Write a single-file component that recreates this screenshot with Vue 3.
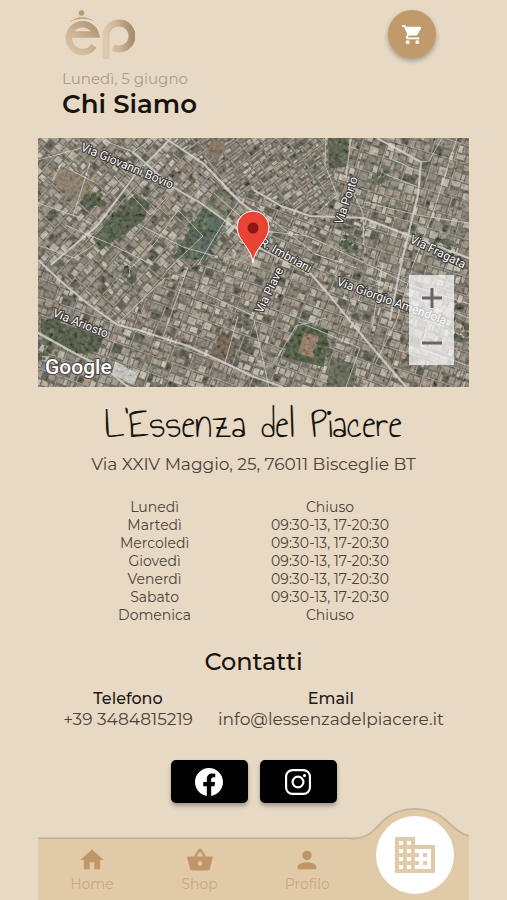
<template>
  <div class="app">
    <header class="header">
      <div class="heading">
        <svg class="logo" viewBox="0 0 72 51" role="img" aria-label="L'Essenza del Piacere">
          <defs>
            <linearGradient id="logo-e" x1="0" y1="1" x2="1" y2="0">
              <stop offset="0" stop-color="#dcc6a8" />
              <stop offset="0.5" stop-color="#c9b090" />
              <stop offset="1" stop-color="#ae9474" />
            </linearGradient>
            <linearGradient id="logo-p" x1="0" y1="0.6" x2="1" y2="0.4">
              <stop offset="0" stop-color="#dfc9ac" />
              <stop offset="0.5" stop-color="#ccb495" />
              <stop offset="1" stop-color="#a88f70" />
            </linearGradient>
          </defs>
          <path d="M7 25.500H33A13.800 13.800 0 1 0 31 37" fill="none" stroke="url(#logo-e)" stroke-width="6.500" />
          <path d="M43 50V26A13 13 0 1 1 50 38.500" fill="none" stroke="url(#logo-p)" stroke-width="7" />
          <path d="M6 13Q18 4 31 12Q18 7 6 13Z" fill="#bb9e78" />
          <circle cx="18.500" cy="4" r="2.800" fill="#b99c75" />
        </svg>
        <p class="date">Lunedì, 5 giugno</p>
        <h1 class="title">Chi Siamo</h1>
      </div>
      <button class="cart" type="button" aria-label="Carrello">
        <svg viewBox="0 0 24 24">
          <path d="M7 18c-1.100 0-2 .9-2 2s.9 2 2 2 2-.9 2-2-.9-2-2-2zM1 2v2h2l3.600 7.600-1.400 2.400C4.500 15.400 5.500 17 7 17h12v-2H7.400c-.1 0-.2-.1-.2-.2L8.100 13h7.500c.7 0 1.400-.4 1.700-1L21 5.500C21.300 4.800 20.900 4 20 4H5.200l-.9-2H1zm16 16c-1.100 0-2 .9-2 2s.9 2 2 2 2-.9 2-2-.9-2-2-2z" />
        </svg>
      </button>
    </header>

    <main>
      <section class="map" aria-label="Mappa">
        <svg class="map-view" viewBox="0 0 431 249" preserveAspectRatio="xMidYMid slice">
          <defs>
            <filter id="grain" x="0" y="0" width="100%" height="100%">
              <feTurbulence type="fractalNoise" baseFrequency="0.25" numOctaves="3" seed="7" />
              <feColorMatrix values="1.500 0 0 0 -0.300  1.500 0 0 0 -0.320  1.500 0 0 0 -0.360  0 0 0 0 1" />
            </filter>
            <clipPath v-for="d in districts" :id="d.id" :key="d.id">
              <path :d="d.outline" />
            </clipPath>
          </defs>
          <rect width="431" height="249" fill="#5d594f" />
          <g v-for="d in districts" :key="d.id" :clip-path="`url(#${d.id})`">
            <g :transform="`translate(${d.x} ${d.y}) rotate(${d.angle})`">
              <rect
                v-for="(b, i) in d.buildings"
                :key="i"
                :x="b.x"
                :y="b.y"
                :width="b.w"
                :height="b.h"
                :fill="b.fill"
              />
              <path class="lane" :d="d.lanes" />
            </g>
          </g>
          <path v-for="area in areas" :key="area.d" :d="area.d" :fill="area.fill" />
          <circle v-for="(t, i) in trees" :key="i" :cx="t.x" :cy="t.y" :r="t.r" :fill="t.fill" />
          <rect width="431" height="249" filter="url(#grain)" opacity="0.25" />
          <path class="street minor" :d="minorStreets" />
          <path class="street major" :d="majorStreets" />
          <text
            v-for="s in streetNames"
            :key="s.name"
            class="street-name"
            :transform="`translate(${s.x} ${s.y}) rotate(${s.angle})`"
          >{{ s.name }}</text>
          <text class="google" x="7" y="236">Google</text>
          <path d="M215 125C214 110 199 103 199 89A16 16 0 0 1 231 89C231 103 216 110 215 125Z" fill="#ea4335" stroke="#fff" stroke-width="1" />
          <circle cx="215" cy="90" r="5.500" fill="#8c1713" />
        </svg>
        <div class="zoom">
          <button type="button" aria-label="Ingrandisci">
            <svg viewBox="0 0 20 20"><path d="M8.500 0h3v8.500H20v3h-8.500V20h-3v-8.500H0v-3h8.500z" /></svg>
          </button>
          <button type="button" aria-label="Riduci">
            <svg viewBox="0 0 20 20"><path d="M0 8.500h20v3H0z" /></svg>
          </button>
        </div>
      </section>

      <section class="shop">
        <h2 class="shop-name">L'Essenza del Piacere</h2>
        <p class="address">Via XXIV Maggio, 25, 76011 Bisceglie BT</p>
        <table class="hours">
          <tbody>
            <tr v-for="row in hours" :key="row.day">
              <th scope="row">{{ row.day }}</th>
              <td>{{ row.time }}</td>
            </tr>
          </tbody>
        </table>
      </section>

      <section class="contacts">
        <h2>Contatti</h2>
        <div class="contact-list">
          <div>
            <h3>Telefono</h3>
            <a href="tel:+393484815219">+39 3484815219</a>
          </div>
          <div>
            <h3>Email</h3>
            <a href="mailto:info@lessenzadelpiacere.it">info@lessenzadelpiacere.it</a>
          </div>
        </div>
        <div class="socials">
          <button type="button" aria-label="Facebook">
            <svg viewBox="0 0 24 24">
              <path d="M24 12.070C24 5.410 18.630 0 12 0S0 5.410 0 12.070C0 18.100 4.390 23.090 10.130 24v-8.440H7.080v-3.490h3.050V9.410c0-3.020 1.790-4.690 4.530-4.690 1.310 0 2.690.24 2.690.24v2.970h-1.520c-1.490 0-1.960.93-1.960 1.890v2.250h3.330l-.53 3.490h-2.800V24C19.610 23.090 24 18.100 24 12.070z" />
            </svg>
          </button>
          <button type="button" aria-label="Instagram">
            <svg class="outline" viewBox="0 0 24 24">
              <rect x="1" y="1" width="22" height="22" rx="6" />
              <circle cx="12" cy="12" r="5" />
              <circle class="dot" cx="18" cy="6" r="1.500" />
            </svg>
          </button>
        </div>
      </section>
    </main>

    <nav class="tabs">
      <svg class="hump" viewBox="0 0 126 96">
        <path d="M0 35H8C24 35 30 27 37 20C46 10 58 5 72 5C86 5 97 10 106 19C113 26 118 30 126 32V96H0Z" />
        <path class="edge" d="M8 35C24 35 30 27 37 20C46 10 58 5 72 5C86 5 97 10 106 19C113 26 118 30 126 32" />
      </svg>
      <a v-for="tab in tabs" :key="tab.label" href="#" class="tab">
        <svg viewBox="0 0 24 24"><path :d="tab.icon" fill-rule="evenodd" /></svg>
        <span>{{ tab.label }}</span>
      </a>
      <a href="#" class="tab current" aria-label="Chi Siamo" aria-current="page">
        <svg viewBox="0 0 24 24">
          <path d="M12 7V3H2v18h20V7H12zM6 19H4v-2h2v2zm0-4H4v-2h2v2zm0-4H4V9h2v2zm0-4H4V5h2v2zm4 12H8v-2h2v2zm0-4H8v-2h2v2zm0-4H8V9h2v2zm0-4H8V5h2v2zm10 12h-8v-2h2v-2h-2v-2h2v-2h-2V9h8v10zm-2-8h-2v2h2v-2zm0 4h-2v2h2v-2z" />
        </svg>
      </a>
    </nav>
  </div>
</template>

<script setup>
const hours = [
  { day: 'Lunedì', time: 'Chiuso' },
  { day: 'Martedì', time: '09:30-13, 17-20:30' },
  { day: 'Mercoledì', time: '09:30-13, 17-20:30' },
  { day: 'Giovedì', time: '09:30-13, 17-20:30' },
  { day: 'Venerdì', time: '09:30-13, 17-20:30' },
  { day: 'Sabato', time: '09:30-13, 17-20:30' },
  { day: 'Domenica', time: 'Chiuso' }
]

const tabs = [
  { label: 'Home', icon: 'M10 20v-6h4v6h5v-8h3L12 3 2 12h3v8z' },
  {
    label: 'Shop',
    icon: 'M17.200 9l-4.400-6.600a1 1 0 0 0-1.600 0L6.800 9H2a1 1 0 0 0-1 1.300l2.500 9.200c.3.900 1 1.500 2 1.500h13c.9 0 1.700-.6 1.900-1.500L23 10c0-.5-.4-1-1-1h-4.800zM9 9l3-4.400L15 9H9zm3 8a2 2 0 1 1 0-4 2 2 0 0 1 0 4z'
  },
  {
    label: 'Profilo',
    icon: 'M12 12a4 4 0 1 0 0-8 4 4 0 0 0 0 8zm0 2c-2.700 0-8 1.300-8 4v2h16v-2c0-2.700-5.300-4-8-4z'
  }
]

const streetNames = [
  { name: 'Via Giovanni Bovio', x: 42, y: 12, angle: 23 },
  { name: 'Via Porto', x: 304, y: 87, angle: -71 },
  { name: 'Via Fragata', x: 371, y: 104, angle: 26 },
  { name: 'R. Imbriani', x: 221, y: 107, angle: 29 },
  { name: 'Via Piave', x: 224, y: 176, angle: -64 },
  { name: 'Via Giorgio Amendola', x: 298, y: 147, angle: 20 },
  { name: 'Via Ariosto', x: 14, y: 178, angle: 22 }
]

const majorStreets = [
  'M0 122L27 147L50 166L80 187L100 192L150 208L187 225L216 239L245 249',
  'M13 127L60 87L97 37L133 0',
  'M95 14L133 48L164 66L200 92L216 104',
  'M127 0L166 26L200 62L218 76',
  'M0 195L40 217L67 230L90 249',
  'M218 108L273 136L292 158L316 188L368 249',
  'M339 0L383 24L380 57L363 126L352 182',
  'M216 52L243 68L272 78L326 80L372 98L431 120'
].join('')

const minorStreets = [
  'M0 22L43 10M0 65L43 80L60 90M14 43L23 27L56 44M27 87L70 105L115 127',
  'M127 140L80 185M150 129L125 199M166 155L216 178M200 178L187 225',
  'M94 129L117 105L140 72L165 98L128 133M176 55L203 79L190 97M203 60L184 87L160 127',
  'M60 0L95 14L115 0M76 38L112 77L128 60M52 25L35 78M0 107L36 120L56 107',
  'M216 67L277 116L319 130M217 92L270 98L375 148L431 166M288 0L287 27L299 57L279 75',
  'M313 0L308 40L325 75L326 107M326 64L379 77L431 85M352 20L379 33M349 37L378 48',
  'M419 0L395 75L374 130M404 0L391 23L383 24M298 122L298 143M216 182L231 249',
  'M261 184L322 210L308 249M288 180L258 188L239 220M184 87L216 108M100 86L145 109L180 119',
  'M330 140L431 180M345 125L334 190M374 132L358 184L337 226M400 146L383 211L431 228'
].join('')

const areas = [
  { d: 'M23 27L55 45L47 63L15 47Z', fill: '#80715b' },
  { d: 'M97 56L112 65L106 82L62 112L55 101L80 72Z', fill: '#3d4933' },
  { d: 'M48 55L70 65L65 70L45 62Z', fill: '#414a31' },
  { d: 'M166 67L189 83L167 122L135 120Z', fill: '#405346' },
  { d: 'M182 48L200 62L190 80L169 65Z', fill: '#505845' },
  { d: 'M181 56L194 63L188 75L176 66Z', fill: '#777764' },
  { d: 'M290 0L311 0L308 29L291 30Z', fill: '#444b33' },
  { d: 'M3 181L20 184L66 199L60 214L38 216L3 194Z', fill: '#3d4630' },
  { d: 'M262 184L290 192L286 229L244 219Z', fill: '#38482d' },
  { d: 'M266 195L281 198L276 220L260 215Z', fill: '#8b6c54' },
  { d: 'M184 193L202 202L190 226L170 219Z', fill: '#625442' },
  { d: 'M293 220L319 226L315 249L288 249Z', fill: '#515644' },
  { d: 'M77 223L100 236L96 247L74 236Z', fill: '#cbc9c3' },
  { d: 'M174 0L189 8L181 22L168 15Z', fill: '#77644f' }
]

// Small seeded generator, so that the roofs are the same at every load
let seed = 41
function random() {
  seed = (seed * 16807) % 2147483647
  return seed / 2147483647
}

function pick(list) {
  return list[Math.floor(random() * list.length)]
}

const roofs = ['#a0978a', '#b5ac9d', '#8e8678', '#999184', '#777064', '#c4bcae', '#a08d7a', '#86806f', '#aeaaa1', '#414237', '#827a6e']

// Blocks of roofs in rows, with a lane round each block
function buildDistrict(id, outline, x, y, angle, blockWidth, blockHeight) {
  const buildings = []
  let lanes = ''
  for (let by = -200; by < 200; by += blockHeight) {
    const shift = random() * 12
    for (let bx = -240; bx < 240; bx += blockWidth) {
      const left = bx + shift
      lanes += `M${left} ${by}v${blockHeight}`
      for (let row = 0; row < 2; row++) {
        let cursor = left + 1
        while (cursor < left + blockWidth - 3) {
          const w = Math.min(3 + random() * 7, left + blockWidth - 1 - cursor)
          buildings.push({
            x: cursor,
            y: by + 1 + row * (blockHeight / 2) + random(),
            w: w - 1,
            h: blockHeight / 2 - 1 - random() * 3,
            fill: pick(roofs)
          })
          cursor += w
        }
      }
    }
    lanes += `M-240 ${by}h480`
  }
  return { id, x, y, angle, outline, buildings, lanes }
}

const districts = [
  buildDistrict('north-west', 'M0 0H127L166 26L216 76V130L180 119L127 140L80 187L27 147L0 122Z', 80, 80, -48, 27, 16),
  buildDistrict('south-west', 'M0 122L27 147L80 187L127 140L180 119L216 104L298 143L368 249H0Z', 150, 190, 20, 21, 17),
  buildDistrict('old-town', 'M127 0H290L299 57L272 78L243 68L216 52L200 62L166 26Z', 220, 30, -37, 18, 11),
  buildDistrict('centre', 'M200 62L216 52L272 78L326 80L326 130L298 143L216 104Z', 260, 100, 22, 19, 13),
  buildDistrict('east', 'M290 0H431V249H368L298 143L326 130V80L272 78L299 57Z', 360, 120, 17, 24, 18)
]

const groves = [
  [94, 70, 12], [78, 88, 13], [68, 100, 9], [57, 61, 6], [159, 88, 12], [150, 110, 11],
  [300, 14, 10], [20, 190, 11], [42, 203, 12], [282, 212, 8], [408, 110, 9], [420, 195, 10],
  [342, 38, 7], [204, 184, 8], [92, 136, 6], [10, 212, 9], [310, 106, 8]
]

const trees = groves.flatMap(([cx, cy, size]) =>
  Array.from({ length: 20 }, () => ({
    x: cx + (random() - 0.5) * size * 2,
    y: cy + (random() - 0.5) * size * 2,
    r: 1 + random() * 2,
    fill: pick(['#2f3d29', '#46533a', '#38482f', '#556047'])
  }))
)
</script>

<style>
body {
  margin: 0;
  background: #e8d9c5;
}
</style>

<style scoped>
.app {
  display: flex;
  flex-direction: column;
  box-sizing: border-box;
  min-height: 100vh;
  padding: 0 38px;
  background: #e8d9c5;
  color: #4b4238;
  font-family: Montserrat, Inter, sans-serif;
}

h1,
h2,
h3,
p {
  margin: 0;
}

button {
  padding: 0;
  border: 0;
  cursor: pointer;
}

a {
  color: inherit;
  text-decoration: none;
}

svg {
  display: block;
}

.header {
  display: flex;
  justify-content: space-between;
  align-items: flex-start;
  padding: 9px 33px 18px 24px;
}

.logo {
  width: 72px;
  height: 51px;
  margin-left: 1px;
}

.date {
  margin-top: 9px;
  color: #a59c94;
  font-size: 15px;
  line-height: 20px;
}

.title {
  color: #17130f;
  font-size: 26px;
  font-weight: 600;
  line-height: 31px;
}

.cart {
  display: grid;
  place-items: center;
  width: 48px;
  height: 48px;
  margin-top: 1px;
  border-radius: 50%;
  background: #c09a6b;
  box-shadow: 0 3px 5px rgba(0, 0, 0, 0.3);
}

.cart svg {
  width: 23px;
  height: 23px;
  fill: #fff;
}

.map {
  position: relative;
}

.map-view {
  width: 100%;
  height: 249px;
}

.lane {
  fill: none;
  stroke: #cbc6bd;
  stroke-width: 1;
  opacity: 0.55;
}

.street {
  fill: none;
  stroke: #dad7d1;
  stroke-linejoin: round;
}

.street.minor {
  stroke-width: 1;
  opacity: 0.7;
}

.street.major {
  stroke-width: 2;
  opacity: 0.8;
}

.street-name {
  fill: #fff;
  stroke: #34312d;
  stroke-width: 2px;
  paint-order: stroke;
  font-family: Roboto, sans-serif;
  font-size: 12px;
}

.google {
  fill: #fff;
  stroke: #494640;
  stroke-width: 2px;
  paint-order: stroke;
  font-family: Roboto, sans-serif;
  font-size: 21px;
  font-weight: 500;
}

.zoom {
  position: absolute;
  right: 15px;
  bottom: 22px;
  display: flex;
  flex-direction: column;
  background: rgba(255, 255, 255, 0.7);
}

.zoom button {
  display: grid;
  place-items: center;
  width: 45px;
  height: 45px;
  background: none;
}

.zoom svg {
  width: 20px;
  height: 20px;
  fill: #666;
}

.shop {
  padding-top: 9px;
  text-align: center;
}

.shop-name {
  color: #17130f;
  font-family: "Annie Use Your Telescope", Lato, sans-serif;
  font-size: 42px;
  font-weight: 400;
  line-height: 56px;
}

.address {
  font-size: 17px;
  line-height: 24px;
}

.hours {
  margin: 22px auto 0;
  border-collapse: collapse;
  font-size: 14px;
  line-height: 18px;
}

.hours th,
.hours td {
  padding: 0;
  font-weight: 400;
}

.hours th {
  padding-right: 80px;
}

.contacts {
  padding-top: 22px;
  text-align: center;
}

.contacts h2 {
  color: #17130f;
  font-size: 24px;
  font-weight: 500;
  line-height: 32px;
}

.contact-list {
  display: flex;
  justify-content: space-evenly;
  margin-top: 11px;
  font-size: 17px;
  line-height: 20px;
}

.contact-list h3 {
  color: #211b15;
  font-size: 16px;
  font-weight: 500;
}

.socials {
  display: flex;
  justify-content: center;
  gap: 12px;
  margin-top: 31px;
}

.socials button {
  display: grid;
  place-items: center;
  width: 77px;
  height: 43px;
  border-radius: 5px;
  background: #000;
  box-shadow: 0 3px 4px rgba(0, 0, 0, 0.3);
}

.socials svg {
  width: 28px;
  height: 28px;
  fill: #fff;
}

.socials .outline {
  width: 26px;
  height: 26px;
  fill: none;
  stroke: #fff;
  stroke-width: 2;
}

.outline .dot {
  fill: #fff;
  stroke: none;
}

.tabs {
  position: relative;
  display: grid;
  grid-template-columns: repeat(4, 1fr);
  height: 61px;
  margin-top: auto;
  background: #e1caa8;
  box-shadow: 0 -1px 2px rgba(90, 80, 60, 0.45);
  clip-path: inset(-40px 0 0 0);
}

.hump {
  position: absolute;
  right: 0;
  bottom: 0;
  width: 126px;
  height: 96px;
  fill: #e1caa8;
}

.hump .edge {
  fill: none;
  stroke: #c9b79b;
  stroke-width: 2;
}

.tab {
  position: relative;
  display: flex;
  flex-direction: column;
  align-items: center;
  padding-top: 7px;
  color: #cba980;
  font-size: 14px;
  line-height: 20px;
}

.tab svg {
  width: 28px;
  height: 28px;
  fill: #c09567;
}

.tab.current {
  position: absolute;
  right: 15px;
  bottom: 6px;
  justify-content: center;
  width: 78px;
  height: 78px;
  padding: 0;
  border-radius: 50%;
  background: #fff;
}

.tab.current svg {
  width: 48px;
  height: 48px;
  fill: #e1caa8;
}
</style>
